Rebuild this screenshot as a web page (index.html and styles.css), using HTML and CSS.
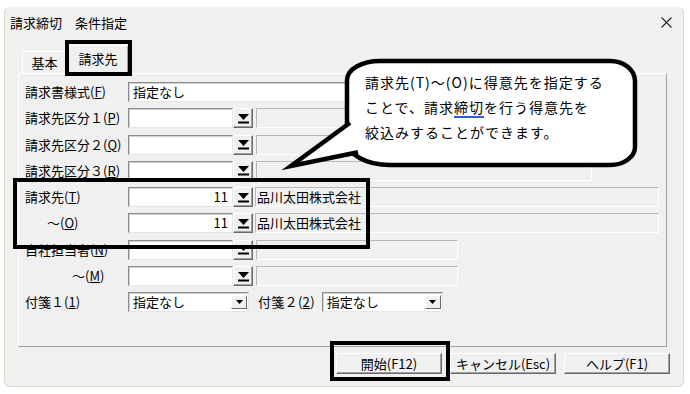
FILE: index.html
```html
<!DOCTYPE html>
<html lang="ja">
<head>
    <meta charset="UTF-8">
    <title>請求締切 条件指定</title>
    <link rel="stylesheet" href="styles.css">
</head>
<body>
<div class="screen">
    <div class="window">
        <div class="titlebar">
            <span class="title">請求締切　条件指定</span>
            <svg class="close" width="11" height="11" viewBox="0 0 11 11">
                <path d="M0.5 0.5 L10.5 10.5 M10.5 0.5 L0.5 10.5" stroke="#222" stroke-width="1.1" fill="none"/>
            </svg>
        </div>

        <div class="tabs">
            <div class="tab">基本</div>
            <div class="tab active">請求先</div>
        </div>

        <div class="panel">
            <div class="form">
                <div class="lbl">請求書様式(<u>F</u>)</div>
                <div class="fields"><div class="input wide">指定なし</div></div>

                <div class="lbl">請求先区分１(<u>P</u>)</div>
                <div class="fields">
                    <div class="input code"></div>
                    <div class="drop"><svg width="11" height="10" viewBox="0 0 11 10"><path d="M0 0 H11 L5.5 6 Z"/><rect x="0" y="7.5" width="11" height="2"/></svg></div>
                    <div class="ro long"></div>
                </div>

                <div class="lbl">請求先区分２(<u>Q</u>)</div>
                <div class="fields">
                    <div class="input code"></div>
                    <div class="drop"><svg width="11" height="10" viewBox="0 0 11 10"><path d="M0 0 H11 L5.5 6 Z"/><rect x="0" y="7.5" width="11" height="2"/></svg></div>
                    <div class="ro long"></div>
                </div>

                <div class="lbl">請求先区分３(<u>R</u>)</div>
                <div class="fields">
                    <div class="input code"></div>
                    <div class="drop"><svg width="11" height="10" viewBox="0 0 11 10"><path d="M0 0 H11 L5.5 6 Z"/><rect x="0" y="7.5" width="11" height="2"/></svg></div>
                    <div class="ro long"></div>
                </div>

                <div class="lbl">請求先(<u>T</u>)</div>
                <div class="fields">
                    <div class="input code num">11</div>
                    <div class="drop"><svg width="11" height="10" viewBox="0 0 11 10"><path d="M0 0 H11 L5.5 6 Z"/><rect x="0" y="7.5" width="11" height="2"/></svg></div>
                    <div class="ro name">品川太田株式会社</div>
                </div>

                <div class="lbl ind1">～(<u>O</u>)</div>
                <div class="fields">
                    <div class="input code num">11</div>
                    <div class="drop"><svg width="11" height="10" viewBox="0 0 11 10"><path d="M0 0 H11 L5.5 6 Z"/><rect x="0" y="7.5" width="11" height="2"/></svg></div>
                    <div class="ro name">品川太田株式会社</div>
                </div>

                <div class="lbl">自社担当者(<u>N</u>)</div>
                <div class="fields">
                    <div class="input code"></div>
                    <div class="drop"><svg width="11" height="10" viewBox="0 0 11 10"><path d="M0 0 H11 L5.5 6 Z"/><rect x="0" y="7.5" width="11" height="2"/></svg></div>
                    <div class="ro short"></div>
                </div>

                <div class="lbl ind2">～(<u>M</u>)</div>
                <div class="fields">
                    <div class="input code"></div>
                    <div class="drop"><svg width="11" height="10" viewBox="0 0 11 10"><path d="M0 0 H11 L5.5 6 Z"/><rect x="0" y="7.5" width="11" height="2"/></svg></div>
                    <div class="ro short"></div>
                </div>

                <div class="lbl">付箋１(<u>1</u>)</div>
                <div class="fields">
                    <div class="select"><span>指定なし</span><span class="arrow"><svg width="7" height="4" viewBox="0 0 7 4"><path d="M0 0 H7 L3.5 4 Z"/></svg></span></div>
                    <span class="lbl2">付箋２(<u>2</u>)</span>
                    <div class="select"><span>指定なし</span><span class="arrow"><svg width="7" height="4" viewBox="0 0 7 4"><path d="M0 0 H7 L3.5 4 Z"/></svg></span></div>
                </div>
            </div>
        </div>

        <div class="buttons">
            <div class="btn">開始(F12)</div>
            <div class="btn">キャンセル(Esc)</div>
            <div class="btn">ヘルプ(F1)</div>
        </div>
    </div>

    <!-- annotation marks over the dialog -->
    <div class="mark mark-tab"></div>
    <div class="mark mark-rows"></div>
    <div class="mark mark-btn"></div>

    <svg class="balloon" width="365" height="125" viewBox="0 0 365 125">
        <path d="M100 11 H330 A25 20 0 0 1 355 31 V97 A25 18 0 0 1 330 115 H110 A43 24 0 0 1 67 91 V30 A33 19 0 0 1 100 11 Z" fill="#fff" stroke="#000" stroke-width="4.5"/>
        <polygon points="73,70.6 11,116 82,101.4" fill="#fff"/>
        <polyline points="70,72.8 11,116 78,102.2" fill="none" stroke="#000" stroke-width="4.5" stroke-miterlimit="10"/>
    </svg>
    <div class="balloon-text">
        請求先(T)～(O)に得意先を指定する<br>
        ことで、請求<span class="ime">締切</span>を行う得意先を<br>
        絞込みすることができます。
    </div>
</div>
</body>
</html>
```

FILE: styles.css
```css
body
{
    margin: 0;
    background: #fff;
    font-family: "Noto Sans CJK JP", "Liberation Sans", sans-serif;
    font-size: 13px;
    color: #000;
}
.screen
{
    position: relative;
    width: 690px;
    height: 394px;
    overflow: hidden;
}
.window
{
    margin: 7px 0 0 4px;
    width: 678px;
    height: 378px;
    background: #f0f0f0;
    border: 1px solid #d6dbc2;
    border-top-color: #eef0e4;
    border-radius: 6px;
    display: flex;
    flex-direction: column;
}
.titlebar
{
    height: 29px;
    display: flex;
    align-items: center;
    justify-content: space-between;
    padding: 0 11px 0 5px;
    line-height: 20px;
}
.tabs
{
    height: 36px;
    margin-left: 13px;
    display: flex;
    align-items: flex-end;
    padding-left: 4px;
}
.tab
{
    width: 43px;
    height: 21px;
    line-height: 21px;
    text-align: center;
    border: 1px solid #fff;
    border-bottom: none;
    border-right-color: #a0a0a0;
    box-sizing: content-box;
}
.tab.active
{
    width: 60px;
    height: 28px;
    line-height: 26px;
    margin-bottom: -1px;
    position: relative;
    background: #f0f0f0;
    border-right: 1px solid #696969;
    box-shadow: inset -1px 0 0 #a0a0a0;
}
.panel
{
    margin-left: 13px;
    width: 641px;
    height: 264px;
    border: 1px solid #fff;
    border-right-color: #a0a0a0;
    border-bottom-color: #a0a0a0;
    padding: 8px 0 0 6px;
    box-sizing: content-box;
}
.form
{
    display: grid;
    grid-template-columns: 103px 1fr;
    grid-auto-rows: 20px;
    row-gap: 6.3px;
    align-items: center;
}
.lbl
{
    line-height: 20px;
    white-space: nowrap;
}
.ind1
{
    padding-left: 22px;
}
.ind2
{
    padding-left: 47px;
}
.fields
{
    display: flex;
    align-items: center;
    height: 20px;
}
.input
{
    height: 20px;
    box-sizing: border-box;
    background: #fff;
    border: 1px solid;
    border-color: #8c8c8c #e6e6e6 #e6e6e6 #8c8c8c;
    box-shadow: inset 1px 1px 0 #d0d0d0;
    line-height: 18px;
    padding-left: 4px;
    white-space: nowrap;
}
.wide
{
    width: 464px;
}
.code
{
    width: 105px;
}
.num
{
    text-align: right;
    padding-right: 4px;
}
.drop
{
    width: 20px;
    height: 20px;
    box-sizing: border-box;
    background: #f0f0f0;
    border: 1px solid;
    border-color: #fff #696969 #696969 #fff;
    box-shadow: inset -1px -1px 0 #a0a0a0;
    display: flex;
    align-items: center;
    justify-content: center;
}
.drop svg
{
    margin-top: 1px;
}
.ro
{
    height: 20px;
    box-sizing: border-box;
    margin-left: 3px;
    border: 1px solid;
    border-color: #b8b8b8 #fff #fff #b8b8b8;
    line-height: 18px;
    white-space: nowrap;
}
.long
{
    width: 336px;
}
.short
{
    width: 202px;
}
.name
{
    width: 404px;
    margin-left: 2px;
    padding-left: 1px;
}
.select
{
    width: 121px;
    height: 20px;
    box-sizing: border-box;
    background: #fff;
    border: 1px solid;
    border-color: #8c8c8c #e6e6e6 #e6e6e6 #8c8c8c;
    box-shadow: inset 1px 1px 0 #d0d0d0;
    display: flex;
    align-items: center;
    justify-content: space-between;
    padding: 0 1px 0 4px;
    line-height: 18px;
}
.arrow
{
    width: 16px;
    height: 14px;
    box-sizing: border-box;
    background: #f0f0f0;
    border: 1px solid;
    border-color: #fff #696969 #696969 #fff;
    display: flex;
    align-items: center;
    justify-content: center;
}
.lbl2
{
    margin: 0 7px 0 9px;
    line-height: 20px;
    letter-spacing: 0.3px;
}
.buttons
{
    display: flex;
    justify-content: flex-end;
    gap: 8px;
    margin-top: 6px;
    padding-right: 13px;
}
.btn
{
    width: 106px;
    height: 21px;
    box-sizing: border-box;
    background: #f0f0f0;
    border: 1px solid;
    border-color: #fff #696969 #696969 #fff;
    box-shadow: inset -1px -1px 0 #a0a0a0;
    text-align: center;
    line-height: 19px;
}
.mark
{
    position: absolute;
    border: 4px solid #000;
    box-sizing: border-box;
}
.mark-tab
{
    left: 65px;
    top: 40px;
    width: 67px;
    height: 36px;
}
.mark-rows
{
    left: 13px;
    top: 178px;
    width: 357px;
    height: 71px;
}
.mark-btn
{
    left: 330px;
    top: 341px;
    width: 120px;
    height: 40px;
}
.balloon
{
    position: absolute;
    left: 280px;
    top: 50px;
}
.balloon-text
{
    position: absolute;
    left: 365px;
    top: 70px;
    font-size: 14px;
    letter-spacing: 1px;
    line-height: 25px;
    white-space: nowrap;
}
.ime
{
    text-decoration: underline;
    text-decoration-color: #2a5fd8;
    text-decoration-thickness: 1.5px;
    text-underline-offset: 3px;
}
```
